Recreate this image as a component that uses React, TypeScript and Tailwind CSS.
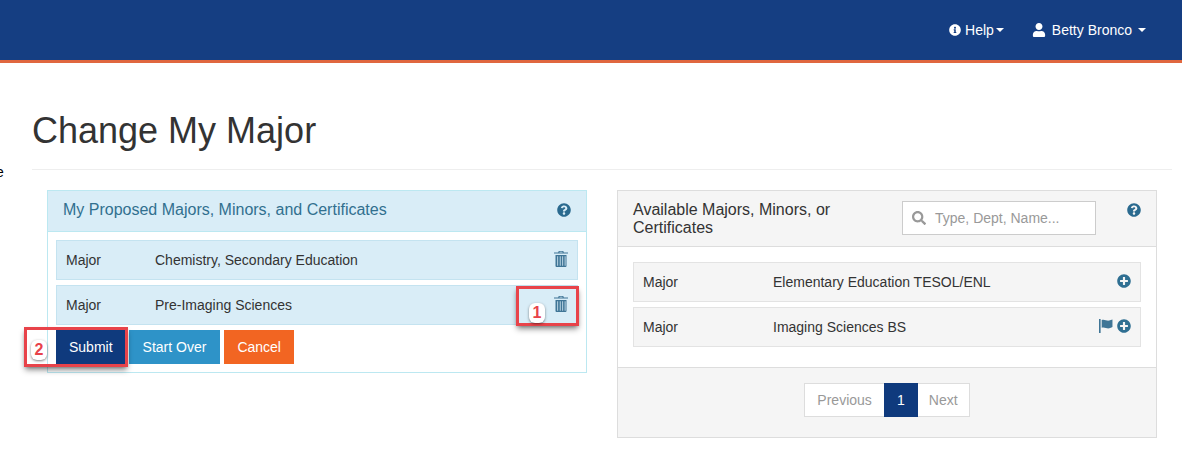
import { FaInfoCircle, FaPlusCircle, FaQuestionCircle, FaSearch, FaUser } from "react-icons/fa";

function Caret() {
  return <span className="h-0 w-0 border-x-4 border-t-4 border-x-transparent border-t-white" />;
}

function TrashIcon() {
  return (
    <svg viewBox="0 0 14 16" className="-mt-0.5 h-4 w-3.5 text-[#3f7596]" fill="currentColor">
      <path d="M4.700 0h4.600l.5 1.600H14v1H0v-1h4.200zM5.400 1.600h3.200L8.400.8H5.600z" fillRule="evenodd" />
      <path d="M1.500 4h11v11a1 1 0 0 1-1 1h-9a1 1 0 0 1-1-1zM3.300 5.200v9.600h.8V5.200zm2.500 0v9.600h.8V5.200zm2.500 0v9.600h.8V5.200zm2.400 0v9.600h.8V5.200z" fillRule="evenodd" />
    </svg>
  );
}

function FlagIcon() {
  return (
    <svg viewBox="0 0 13 13" className="size-3.5 text-[#3f7596]" fill="currentColor">
      <path d="M0 0h1.500v13H0z" />
      <path d="M2.500 1c2.500-1 4.500 1 7 .5.900-.2 2-.6 3-1v7c-1 .6-2 1-3 1.200-2.500.4-4.500-1.500-7-.5z" />
    </svg>
  );
}

function ProposedRow({ name }: { name: string }) {
  return (
    <div className="flex h-10 items-center border border-[#c4e3f0] bg-[#d9edf7] pl-2.25 pr-2.25 text-[#333]">
      <span className="w-22.25">Major</span>
      <span className="flex-1">{name}</span>
      <TrashIcon />
    </div>
  );
}

function AvailableRow({ name, flagged }: { name: string; flagged?: boolean }) {
  return (
    <div className="flex h-10 items-center border border-[#e3e3e3] bg-[#f5f5f5] pl-2.25 pr-2.25 text-[#333]">
      <span className="w-32.5">Major</span>
      <span className="flex-1">{name}</span>
      <div className="-mt-0.5 flex items-center gap-1 text-[#2f6f92]">
        {flagged ? <FlagIcon /> : null}
        <FaPlusCircle className="size-3.5" />
      </div>
    </div>
  );
}

function Callout({ digit, className, badge }: { digit: string; className: string; badge: string }) {
  return (
    <div className={`absolute border-[3px] border-[#e8434a] shadow-md shadow-black/40 ${className}`}>
      <span className={`absolute flex h-5 w-4 items-center justify-center rounded-md bg-white text-base font-bold text-[#e8434a] shadow shadow-black/40 ${badge}`}>
        {digit}
      </span>
    </div>
  );
}

export default function App() {
  return (
    <div className="relative h-[475px] overflow-hidden bg-white font-['Liberation_Sans',Arial,sans-serif] text-sm text-[#333]">
      <header className="flex items-center justify-end gap-7 border-b-[3px] border-[#e0673f] bg-[#153e82] py-5 pr-9 text-white">
        <div className="flex items-center gap-0.5">
          <FaInfoCircle className="mr-0.5 size-3" />
          <span>Help</span>
          <Caret />
        </div>
        <div className="flex items-center gap-1.5">
          <FaUser className="size-3.5" />
          <span>Betty Bronco</span>
          <Caret />
        </div>
      </header>

      <span className="absolute -left-1 top-40 mt-0.5 text-black">e</span>

      <main className="pl-8 pr-2.5">
        <h1 className="mt-12 border-b border-[#eeeeee] pb-4.5 text-4xl leading-10">Change My Major</h1>

        <div className="mt-5 grid grid-cols-2 items-start gap-7.5 px-3.75">
          <section className="border border-[#bce8f1]">
            <div className="flex h-10.25 items-center justify-between border-b border-[#bce8f1] bg-[#d9edf7] px-3.75 pb-0.5 text-base text-[#31708f]">
              <span>My Proposed Majors, Minors, and Certificates</span>
              <FaQuestionCircle className="size-3.5 text-[#2a6a8f]" />
            </div>
            <div className="flex flex-col gap-[5px] p-2">
              <ProposedRow name="Chemistry, Secondary Education" />
              <ProposedRow name="Pre-Imaging Sciences" />
              <div className="flex gap-0.75 text-white">
                <button className="h-8.5 bg-[#0f3a7d] px-3.25">Submit</button>
                <button className="h-8.5 bg-[#2e93c8] px-3.5">Start Over</button>
                <button className="ml-px h-8.5 bg-[#f26522] px-3.25">Cancel</button>
              </div>
            </div>
          </section>

          <section className="border border-[#dddddd]">
            <div className="flex h-14 items-start border-b border-[#dddddd] bg-[#f5f5f5] px-3.75">
              <h2 className="mt-2.5 w-64 text-base leading-[18px]">Available Majors, Minors, or Certificates</h2>
              <div className="ml-3.25 mt-2.5 flex h-8.5 w-48.5 items-center gap-2.25 border border-[#cccccc] bg-white px-2.25 text-[#999]">
                <FaSearch className="size-3.5" />
                <span>Type, Dept, Name...</span>
              </div>
              <FaQuestionCircle className="ml-auto mt-3 size-3.5 text-[#2a6a8f]" />
            </div>
            <div className="flex flex-col gap-[5px] px-3.75 pb-5 pt-3.75">
              <AvailableRow name="Elementary Education TESOL/ENL" />
              <AvailableRow name="Imaging Sciences BS" flagged />
            </div>
            <div className="flex justify-center border-t border-[#dddddd] bg-[#f5f5f5] pb-5 pt-3.75">
              <div className="flex h-8.5 items-center border border-[#dddddd] bg-white text-[#999]">
                <span className="px-3">Previous</span>
                <span className="flex h-8.5 w-8.5 items-center justify-center bg-[#0f3a7d] text-white">1</span>
                <span className="px-2.75">Next</span>
              </div>
            </div>
          </section>
        </div>
      </main>

      <Callout digit="1" className="left-[516px] top-[286px] h-10 w-[63px]" badge="left-2.5 top-3.5" />
      <Callout digit="2" className="left-6 top-[327px] h-10 w-[104px]" badge="left-1 top-2.5" />
    </div>
  );
}
